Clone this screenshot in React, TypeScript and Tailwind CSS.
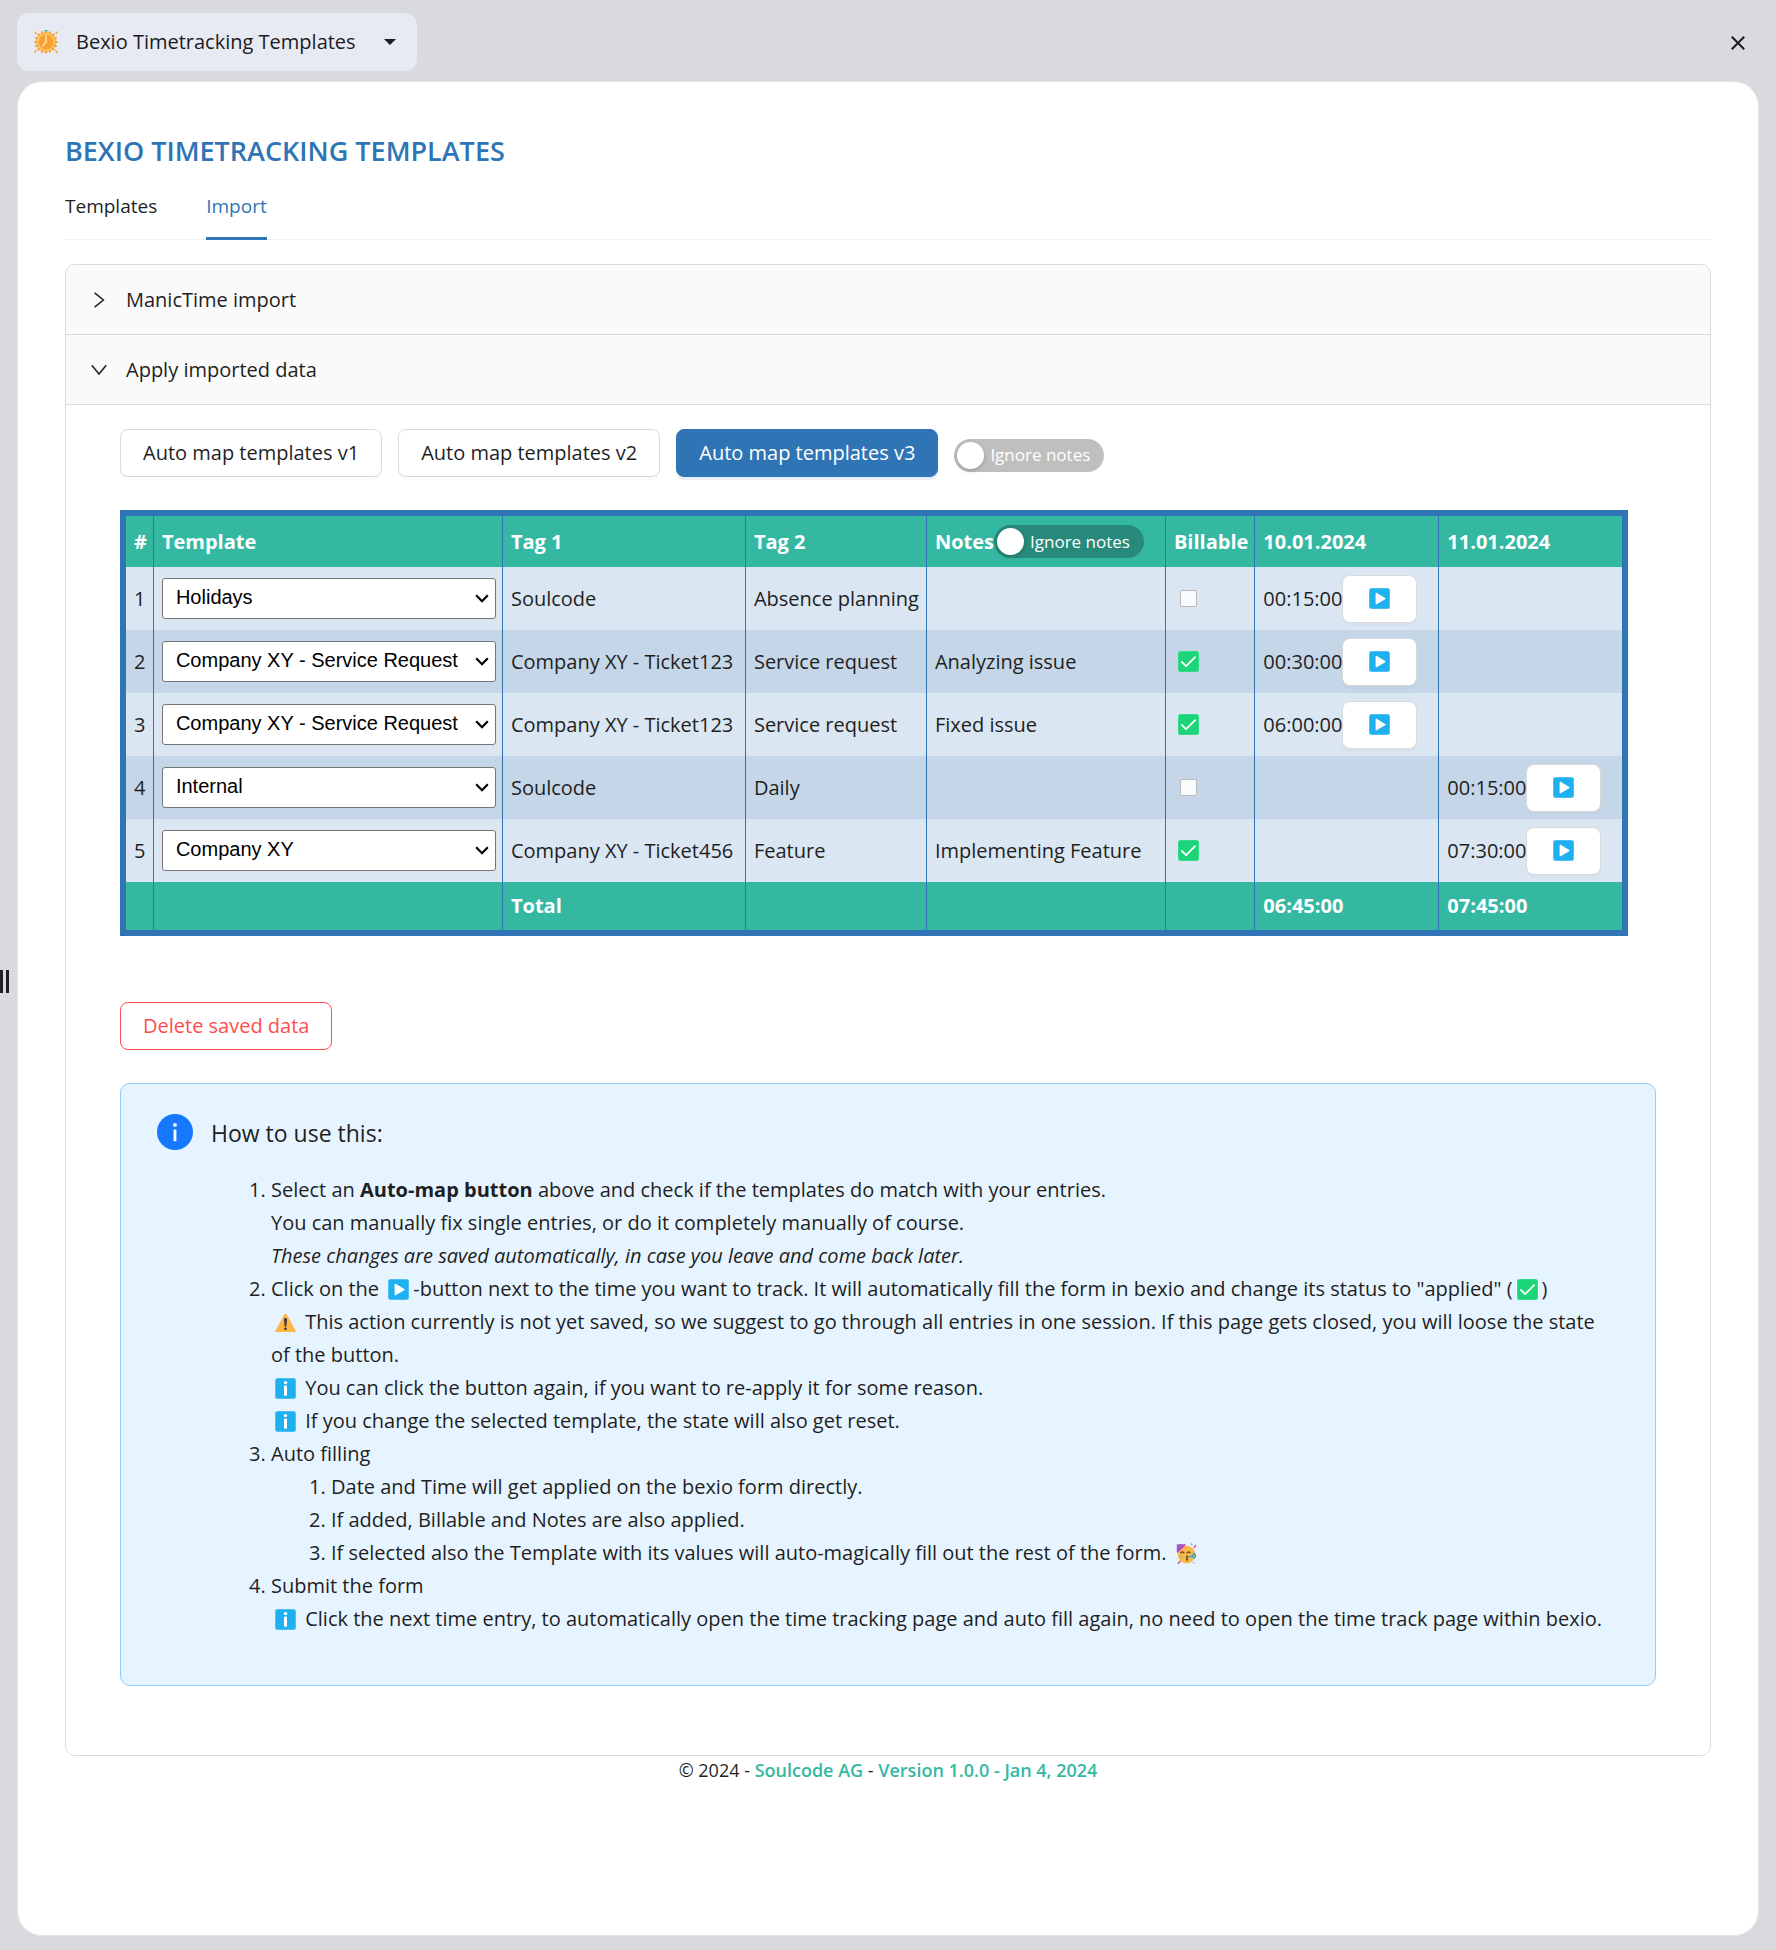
import { useState, type ReactNode } from "react";

type Row = {
  template: string;
  tag1: string;
  tag2: string;
  notes: string;
  billable: boolean;
  times: [string, string];
};

const TEMPLATES = ["Holidays", "Company XY - Service Request", "Internal", "Company XY"];

const ROWS: Row[] = [
  { template: "Holidays", tag1: "Soulcode", tag2: "Absence planning", notes: "", billable: false, times: ["00:15:00", ""] },
  { template: "Company XY - Service Request", tag1: "Company XY - Ticket123", tag2: "Service request", notes: "Analyzing issue", billable: true, times: ["00:30:00", ""] },
  { template: "Company XY - Service Request", tag1: "Company XY - Ticket123", tag2: "Service request", notes: "Fixed issue", billable: true, times: ["06:00:00", ""] },
  { template: "Internal", tag1: "Soulcode", tag2: "Daily", notes: "", billable: false, times: ["", "00:15:00"] },
  { template: "Company XY", tag1: "Company XY - Ticket456", tag2: "Feature", notes: "Implementing Feature", billable: true, times: ["", "07:30:00"] },
];

const CELL = "border-r border-[#2f75b5] pr-1.5 pl-2 last:border-r-0";

function PlayIcon({ className = "" }: { className?: string }) {
  return (
    <svg viewBox="0 0 21 21" className={`size-[21px] shrink-0 ${className}`} aria-hidden="true">
      <rect width="21" height="21" rx="2.5" fill="#5cc6f5" />
      <rect x="0.8" y="0.8" width="19.4" height="19.4" rx="2" fill="#1eb0ef" />
      <path d="M6.6 5.2v10.6c0 .6.5.8 1 .5l8.6-5.1c.5-.3.5-.9 0-1.2L7.6 4.8c-.5-.3-1-.1-1 .4Z" fill="#fff" />
    </svg>
  );
}

function CheckIcon({ className = "" }: { className?: string }) {
  return (
    <svg viewBox="0 0 21 21" className={`size-[21px] shrink-0 ${className}`} aria-hidden="true">
      <rect width="21" height="21" rx="2.5" fill="#3ddc8c" />
      <rect x="0.8" y="0.8" width="19.4" height="19.4" rx="2" fill="#1bd578" />
      <path d="m3.9 11 4.2 4.2 9-9" fill="none" stroke="#fff" strokeWidth="1.8" strokeLinecap="round" strokeLinejoin="round" />
    </svg>
  );
}

function InfoSquare({ className = "" }: { className?: string }) {
  return (
    <svg viewBox="0 0 21 21" className={`size-[21px] shrink-0 ${className}`} aria-hidden="true">
      <rect width="21" height="21" rx="2.5" fill="#5cc6f5" />
      <rect x="0.8" y="0.8" width="19.4" height="19.4" rx="2" fill="#1eb0ef" />
      <circle cx="10.5" cy="4.6" r="1.7" fill="#fff" />
      <rect x="9" y="7.6" width="3" height="10.2" rx="0.8" fill="#fff" />
    </svg>
  );
}

function WarningIcon({ className = "" }: { className?: string }) {
  return (
    <svg viewBox="0 0 21 21" className={`size-[21px] shrink-0 ${className}`} aria-hidden="true">
      <path d="M9.4 2.2.5 18.4c-.4.8 0 1.5.9 1.5h18.2c.9 0 1.3-.7.9-1.5L11.6 2.2c-.5-.9-1.7-.9-2.2 0Z" fill="#fdb745" />
      <path d="M9 7.2c0-1.6 3-1.6 3 0l-.5 6.6c-.1 1.2-1.9 1.2-2 0Z" fill="#4a3b33" />
      <circle cx="10.5" cy="16.8" r="1.4" fill="#4a3b33" />
    </svg>
  );
}

function PartyFace({ className = "" }: { className?: string }) {
  return (
    <svg viewBox="0 0 21 21" className={`size-[21px] shrink-0 ${className}`} aria-hidden="true">
      <circle cx="10.6" cy="11.6" r="8.8" fill="#fdb745" />
      <path d="M.8 1.2h8.4c.6 0 .8.5.4.9L2 9.6c-.5.5-1.2.2-1.2-.4Z" fill="#8a5fd6" />
      <path d="M1 5 4.6 1.2h1.6L1 6.6ZM1.2 9.2 8.6 1.3l1.1.4L2 9.6Z" fill="#e2419a" />
      <path d="M4.8 10c.6-1.5 2.6-1.5 3.2 0M11 10c.6-1.5 2.6-1.5 3.2 0" fill="none" stroke="#4a3b33" strokeWidth="1.2" strokeLinecap="round" />
      <path d="M10.2 12.8h1.8v1.6h-1v1h1v2.2h-1.8Z" fill="#4a3b33" />
      <path d="M12.8 14.2 16 13l2.4-2.6c1.2.8 1.6 2.8.4 4-.8.8-2.2.2-1.8-.8" fill="none" stroke="#2fa3d8" strokeWidth="1.4" strokeLinecap="round" />
      <path d="m18.2 4.4 1.4-1.8M2.4 20.2 4 18.4" stroke="#f0508f" strokeWidth="1.6" strokeLinecap="round" />
      <circle cx="15.6" cy="1.2" r="0.9" fill="#3fb7e8" />
      <circle cx="17.6" cy="19.8" r="0.8" fill="#3fb7e8" />
      <circle cx="4.8" cy="14" r="0.8" fill="#3fb7e8" />
    </svg>
  );
}

function ClockLogo() {
  const teeth = Array.from({ length: 16 }, (_, i) => i * 22.5);
  return (
    <svg viewBox="0 0 24 24" className="size-6 shrink-0" aria-hidden="true">
      {teeth.map((angle) => (
        <path key={angle} d="M10.7 3.4 11.1.4h1.8l.4 3Z" fill="#f7a234" transform={`rotate(${angle} 12 12)`} />
      ))}
      <path d="M2.4 4.2.6 1.6M21.6 4.2l1.8-2.6M2.6 19.8.6 22.8M21.4 19.8l2 3" stroke="#f7a234" strokeWidth="1.4" />
      <circle cx="12" cy="12" r="9.8" fill="#f9a12e" />
      <circle cx="12" cy="12" r="8.2" fill="none" stroke="#fbd98a" strokeWidth="1.1" />
      <path d="M12 5.2V12l-3.2 4.2" fill="none" stroke="#fdebb5" strokeWidth="1.3" strokeLinecap="round" strokeLinejoin="round" />
      <path d="M9 .2h6l-2.4 1.6Z" fill="#34b8a2" />
    </svg>
  );
}

function IgnoreSwitch({ label, trackClass }: { label: string; trackClass: string }) {
  const [on, setOn] = useState(false);
  return (
    <button
      type="button"
      role="switch"
      aria-checked={on}
      aria-label={label}
      onClick={() => setOn(!on)}
      className={`inline-flex h-[33px] w-[150px] items-center gap-1.5 rounded-full pl-[3px] text-[17px] font-normal whitespace-nowrap text-white ${on ? "bg-[#2f75b5]" : trackClass}`}
    >
      <span className="size-[27px] shrink-0 rounded-full bg-white shadow-[0_2px_5px_rgba(0,35,11,0.2)]" />
      <span>Ignore notes</span>
    </button>
  );
}

function TemplateSelect({ value, row }: { value: string; row: number }) {
  return (
    <div className="relative">
      <select
        defaultValue={value}
        aria-label={`Template for entry ${row}`}
        className="block h-[41px] w-full appearance-none rounded-[3px] border border-[#767676] bg-white pr-6 pb-[3px] pl-[13px] font-['Liberation_Sans',sans-serif] text-[20px] text-black"
      >
        {TEMPLATES.map((name) => (
          <option key={name}>{name}</option>
        ))}
      </select>
      <svg viewBox="0 0 14 9" className="pointer-events-none absolute top-4 right-[7px] h-[9px] w-3.5" aria-hidden="true">
        <path d="m1.2 1.2 5.8 6 5.8-6" fill="none" stroke="#000" strokeWidth="2.2" />
      </svg>
    </div>
  );
}

function Billable({ checked, row }: { checked: boolean; row: number }) {
  const label = `Billable entry ${row}`;
  if (!checked) {
    return (
      <span className="flex pl-1.5">
        <input type="checkbox" aria-label={label} className="size-[17px] appearance-none rounded-[2px] border border-[#b9b9b9] bg-[#fafbfc]" />
      </span>
    );
  }
  return (
    <label className="flex pl-1">
      <input type="checkbox" defaultChecked aria-label={label} className="sr-only" />
      <CheckIcon />
    </label>
  );
}

function TimeCell({ time }: { time: string }) {
  if (!time) return null;
  return (
    <div className="flex items-center">
      <span>{time}</span>
      <button
        type="button"
        aria-label={`Track ${time}`}
        className="flex h-12 w-[75px] items-center justify-center rounded-lg border border-[#d9d9d9] bg-white shadow-[0_3px_0_rgba(0,0,0,0.02)]"
      >
        <PlayIcon />
      </button>
    </div>
  );
}

function PushButton({ children, variant = "plain" }: { children: ReactNode; variant?: "plain" | "primary" | "danger" }) {
  const look = {
    plain: "border-[#d9d9d9] bg-white shadow-[0_3px_0_rgba(0,0,0,0.02)]",
    primary: "border-[#2f75b5] bg-[#2f75b5] text-white shadow-[0_3px_0_rgba(5,95,155,0.1)]",
    danger: "border-[#ff4d4f] bg-white text-[#ff4d4f] shadow-[0_3px_0_rgba(0,0,0,0.02)]",
  }[variant];
  return (
    <button type="button" className={`h-12 rounded-lg border px-[22px] whitespace-nowrap ${look}`}>
      {children}
    </button>
  );
}

const EMOJI = "mx-1 inline-block align-[-4px]";

export default function App() {
  return (
    <div className="relative flex min-h-screen flex-col bg-[#d9dade] px-[17px] pt-[13px] pb-3.5 font-['Open_Sans','Noto_Sans',sans-serif] text-[20px] leading-8 text-[#1f1f1f]">
      <header className="mb-[10px] flex items-center justify-between">
        <button type="button" className="flex h-[58px] items-center rounded-xl bg-[#e8eaf3] pr-[21px] pl-[17px] text-[#1b1b1f]">
          <ClockLogo />
          <span className="ml-[18px] font-medium">Bexio Timetracking Templates</span>
          <svg viewBox="0 0 12 6" className="ml-7 h-1.5 w-3" aria-hidden="true">
            <path d="M0 0h12L6 6Z" fill="#1b1b1f" />
          </svg>
        </button>
        <button type="button" aria-label="Close" className="mt-0.5 mr-[13px] flex size-4 items-center justify-center">
          <svg viewBox="0 0 14 14" className="size-3.5 shrink-0" aria-hidden="true">
            <path d="m.8.8 12.4 12.4M13.2.8.8 13.2" stroke="#1b1b1f" strokeWidth="2" />
          </svg>
        </button>
      </header>

      <div className="absolute top-[970px] left-0 flex h-[23px] gap-[3px]" aria-hidden="true">
        <span className="w-[3px] bg-[#1f2023]" />
        <span className="w-[3px] bg-[#1f2023]" />
      </div>

      <main className="flex-1 rounded-[25px] border border-[#e4e4ec] bg-white px-[47px] pt-[49px]">
        <h1 className="pb-px text-[27px] leading-10 font-semibold text-[#2f75b5]">BEXIO TIMETRACKING TEMPLATES</h1>

        <nav className="flex gap-[49px] border-b border-[#f0f0f0] text-[19px]">
          <a href="#templates" className="pt-[18px] pb-[17px]">Templates</a>
          <a href="#import" aria-current="page" className="-mb-px border-b-3 border-[#2f75b5] pt-[18px] pb-[15px] text-[#2f75b5]">
            Import
          </a>
        </nav>

        <div className="mt-6 rounded-[10px] border border-[#d9d9d9]">
          <button type="button" aria-expanded="false" className="flex h-[70px] w-full items-center gap-[19px] rounded-t-[9px] border-b border-[#d9d9d9] bg-[#fafafa] pl-[25px]">
            <svg viewBox="0 0 16 16" className="size-4 shrink-0" aria-hidden="true">
              <path d="m3.6.8 8.8 7.2-8.8 7.2" fill="none" stroke="#1f1f1f" strokeWidth="1.5" />
            </svg>
            ManicTime import
          </button>
          <button type="button" aria-expanded="true" className="flex h-[70px] w-full items-center gap-[19px] border-b border-[#d9d9d9] bg-[#fafafa] pl-[25px]">
            <svg viewBox="0 0 16 16" className="size-4 shrink-0" aria-hidden="true">
              <path d="M.8 3.2 8 12 15.2 3.2" fill="none" stroke="#1f1f1f" strokeWidth="1.5" />
            </svg>
            Apply imported data
          </button>

          <div className="px-[54px] pt-6 pb-[69px]">
            <div className="flex items-center gap-4">
              <PushButton>Auto map templates v1</PushButton>
              <PushButton>Auto map templates v2</PushButton>
              <PushButton variant="primary">Auto map templates v3</PushButton>
              <div className="flex pt-1">
                <IgnoreSwitch label="Ignore notes when mapping" trackClass="bg-[#bfbfbf]" />
              </div>
            </div>

            <div className="mt-[33px] w-fit max-w-full overflow-x-auto border-6 border-[#2f75b5]">
              <table className="table-fixed border-separate border-spacing-0 text-left">
                <colgroup>
                  <col className="w-[27px]" />
                  <col className="w-[349px]" />
                  <col className="w-[243px]" />
                  <col className="w-[181px]" />
                  <col className="w-[239px]" />
                  <col className="w-[89px]" />
                  <col className="w-[184px]" />
                  <col className="w-[183px]" />
                </colgroup>
                <thead>
                  <tr className="h-[51px] bg-[#34b8a2] whitespace-nowrap text-white">
                    <th className={CELL}>#</th>
                    <th className={CELL}>Template</th>
                    <th className={CELL}>Tag 1</th>
                    <th className={CELL}>Tag 2</th>
                    <th className={CELL}>
                      <div className="flex items-center">
                        Notes
                        <IgnoreSwitch label="Ignore notes column" trackClass="bg-[#278a7a]" />
                      </div>
                    </th>
                    <th className={CELL}>Billable</th>
                    <th className={CELL}>10.01.2024</th>
                    <th className={CELL}>11.01.2024</th>
                  </tr>
                </thead>
                <tbody>
                  {ROWS.map((row, i) => (
                    <tr key={i} className="h-[63px] bg-[#dae6f2] whitespace-nowrap even:bg-[#c4d6e8]">
                      <td className={CELL}>{i + 1}</td>
                      <td className={CELL}><TemplateSelect value={row.template} row={i + 1} /></td>
                      <td className={CELL}>{row.tag1}</td>
                      <td className={CELL}>{row.tag2}</td>
                      <td className={CELL}>{row.notes}</td>
                      <td className={CELL}><Billable checked={row.billable} row={i + 1} /></td>
                      <td className={CELL}><TimeCell time={row.times[0]} /></td>
                      <td className={CELL}><TimeCell time={row.times[1]} /></td>
                    </tr>
                  ))}
                </tbody>
                <tfoot>
                  <tr className="h-12 bg-[#34b8a2] font-bold text-white">
                    <td className={CELL} />
                    <td className={CELL} />
                    <td className={CELL}>Total</td>
                    <td className={CELL} />
                    <td className={CELL} />
                    <td className={CELL} />
                    <td className={CELL}>06:45:00</td>
                    <td className={CELL}>07:45:00</td>
                  </tr>
                </tfoot>
              </table>
            </div>

            <div className="mt-[66px] flex">
              <PushButton variant="danger">Delete saved data</PushButton>
            </div>

            <section className="mt-[33px] flex gap-[18px] rounded-[10px] border border-[#91caff] bg-[#e6f4ff] pt-[30px] pr-10 pb-[50px] pl-9">
              <svg viewBox="0 0 36 36" className="size-9 shrink-0" aria-hidden="true">
                <circle cx="18" cy="18" r="18" fill="#1677ff" />
                <circle cx="18" cy="10.9" r="1.9" fill="#fff" />
                <rect x="16.6" y="15.4" width="2.8" height="11.8" rx="0.4" fill="#fff" />
              </svg>
              <div className="min-w-0 flex-1">
                <h2 className="text-[23px] leading-[38px]">How to use this:</h2>
                <ol className="mt-[21px] list-decimal pl-[60px] leading-[33px]">
                  <li>
                    Select an <strong>Auto-map button</strong> above and check if the templates do match with your entries.
                    <br />
                    You can manually fix single entries, or do it completely manually of course.
                    <br />
                    <em>These changes are saved automatically, in case you leave and come back later.</em>
                  </li>
                  <li>
                    Click on the <PlayIcon className={EMOJI} />
                    -button next to the time you want to track. It will automatically fill the form in bexio and change its status to "applied" (
                    <CheckIcon className={EMOJI} />)
                    <br />
                    <WarningIcon className={EMOJI} /> This action currently is not yet saved, so we suggest to go through all entries in one session. If this page gets closed, you will loose the state of the button.
                    <br />
                    <InfoSquare className={EMOJI} /> You can click the button again, if you want to re-apply it for some reason.
                    <br />
                    <InfoSquare className={EMOJI} /> If you change the selected template, the state will also get reset.
                  </li>
                  <li>
                    Auto filling
                    <ol className="list-decimal pl-[60px]">
                      <li>Date and Time will get applied on the bexio form directly.</li>
                      <li>If added, Billable and Notes are also applied.</li>
                      <li>
                        If selected also the Template with its values will auto-magically fill out the rest of the form. <PartyFace className={EMOJI} />
                      </li>
                    </ol>
                  </li>
                  <li>
                    Submit the form
                    <br />
                    <InfoSquare className={EMOJI} /> Click the next time entry, to automatically open the time tracking page and auto fill again, no need to open the time track page within bexio.
                  </li>
                </ol>
              </div>
            </section>
          </div>
        </div>

        <footer className="text-center text-[18px] leading-7">
          © 2024 -{" "}
          <a href="#soulcode" className="font-semibold text-[#34b8a2]">Soulcode AG</a>
          {" - "}
          <a href="#version" className="font-semibold text-[#34b8a2]">Version 1.0.0 - Jan 4, 2024</a>
        </footer>
      </main>
    </div>
  );
}
